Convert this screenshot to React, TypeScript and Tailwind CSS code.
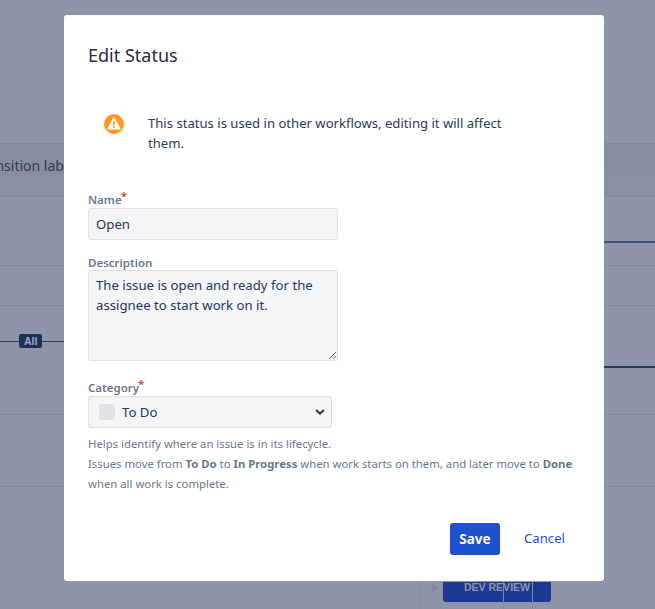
import React from "react";

const Background = () => (
  <div className="absolute inset-0 overflow-hidden bg-[#8f95a8] text-[#2f3a55]">
    <div className="mt-[143px] flex flex-col">
      <div className="flex h-[54px] items-center overflow-hidden border-y border-[#848a9d] bg-gradient-to-b from-[#878da0] to-[#8a90a3] pb-[8px]">
        <span className="ml-[-25px] whitespace-nowrap text-[14px] leading-[18px]">Transition labels</span>
      </div>
      <div className="flex h-[69px] justify-end border-b border-[#848a9d] pt-[44px]">
        <div className="h-[2px] w-[51px] bg-[#46537a]" />
      </div>
      <div className="h-[40px] border-b border-[#848a9d]" />
      <div className="flex h-[109px] justify-between border-b border-[#848a9d]">
        <div className="mt-[28px] flex h-[14px] w-[64px] items-center bg-[linear-gradient(#2c3a5e,#2c3a5e)] bg-[length:100%_1px] bg-center bg-no-repeat pl-[19px]">
          <span className="rounded-[2px] bg-[#1f2f5c] px-[5px] font-['Liberation_Sans',sans-serif] text-[10.5px] font-bold leading-[14px] text-[#a5abbc]">
            All
          </span>
        </div>
        <div className="mt-[60px] h-[2px] w-[51px] bg-[#2f3c60]" />
      </div>
      <div className="h-[72px] border-b border-[#848a9d]" />
      <div className="flex h-[123px] items-end pl-[419px]">
        <div className="h-[28px] w-px bg-[#848a9d]" />
        <div className="mb-[18px] ml-[12px] h-0 w-0 border-y-[4px] border-l-[7px] border-y-transparent border-l-[#7f869a]" />
        <div className="relative mb-[8px] ml-[4px] flex h-[20px] w-[108px] items-center justify-center rounded-b-[3px] bg-[#1c3a94] pb-[9px] font-['Liberation_Sans',sans-serif] text-[10.5px] font-bold text-[#8f95a8]">
          DEV REVIEW
          <div className="absolute left-[60px] top-0 h-[28px] w-px bg-[#848a9d]" />
          <div className="absolute left-[89px] top-0 h-[28px] w-px bg-[#848a9d]" />
        </div>
      </div>
    </div>
  </div>
);

const Req = () => <span className="relative top-[-4px] ml-[-1px] text-[#d9402b]">*</span>;

const labelClass = "block text-[11.5px] font-semibold text-[#6b778c]";

const App = () => {
  return (
    <div className="relative flex h-[609px] w-[655px] overflow-hidden pl-[64px] pt-[15px] font-['Noto_Sans',sans-serif] text-[#253858]">
      <Background />
      <div className="relative flex h-[566px] w-[540px] flex-col rounded-[3px] bg-white px-6 pb-[26px]">
        <h2 className="pt-[26px] text-[18px] leading-[28px] text-[#2a2a45]">Edit Status</h2>

        <div className="mt-[45px] flex items-start pl-[16px]">
          <svg width="20" height="20" viewBox="0 0 20 20" className="shrink-0">
            <circle cx="10" cy="10" r="10" fill="#ff991f" />
            <path d="M10 3.8 L16 14.8 H4 Z" fill="#fff" stroke="#fff" strokeWidth="1.2" strokeLinejoin="round" />
            <rect x="9.1" y="7.2" width="1.8" height="4.2" fill="#ff991f" />
            <rect x="9.1" y="12.2" width="1.8" height="1.8" fill="#ff991f" />
          </svg>
          <p className="ml-[24px] mt-[-1px] w-[364px] text-[13.1px] leading-[20px] text-[#2b3a55]">
            This status is used in other workflows, editing it will affect them.
          </p>
        </div>

        <div className="mt-[39px]">
          <label className={`${labelClass} leading-[16px]`}>
            Name<Req />
          </label>
          <input
            readOnly
            value="Open"
            className="block h-[32px] w-[250px] rounded-[3px] border border-[#dfe1e6] bg-[#f4f5f7] px-[7px] text-[13.2px] outline-none"
          />
        </div>

        <div className="mt-[15px]">
          <label className={`${labelClass} leading-[15px]`}>Description</label>
          <textarea
            readOnly
            value="The issue is open and ready for the assignee to start work on it."
            className="block h-[91px] w-[250px] rounded-[3px] border border-[#dfe1e6] bg-[#f4f5f7] px-[7px] py-[4px] text-[13.2px] leading-[20px] outline-none"
          />
        </div>

        <div className="mt-[19px]">
          <label className={`${labelClass} leading-[16px]`}>
            Category<Req />
          </label>
          <div className="flex h-[32px] w-[244px] items-center rounded-[3px] border border-[#dfe1e6] bg-[#f4f5f7] pl-[10px] pr-[6px]">
            <span className="h-[16px] w-[16px] rounded-[3px] bg-[#dfe1e6]" />
            <span className="ml-[7px] flex-1 pt-[1px] text-[13.2px]">To Do</span>
            <svg width="10" height="6" viewBox="0 0 10 6">
              <path d="M1.2 1 L5 4.6 L8.8 1" fill="none" stroke="#22304a" strokeWidth="1.9" />
            </svg>
          </div>
        </div>

        <div className="mt-[6px] text-[11.33px] leading-[20px] text-[#6b778c]">
          <p>Helps identify where an issue is in its lifecycle.</p>
          <p>
            Issues move from <b>To Do</b> to <b>In Progress</b> when work starts on them, and later move to <b>Done</b> when all work is complete.
          </p>
        </div>

        <div className="mt-auto flex items-center justify-end">
          <button className="h-[32px] w-[50px] rounded-[3px] bg-[#1d4fcf] text-[13.5px] font-bold text-white">
            Save
          </button>
          <button className="ml-[24px] mr-[15px] h-[32px] text-[13.2px] text-[#1d4fcf]">Cancel</button>
        </div>
      </div>
    </div>
  );
};

export default App;
